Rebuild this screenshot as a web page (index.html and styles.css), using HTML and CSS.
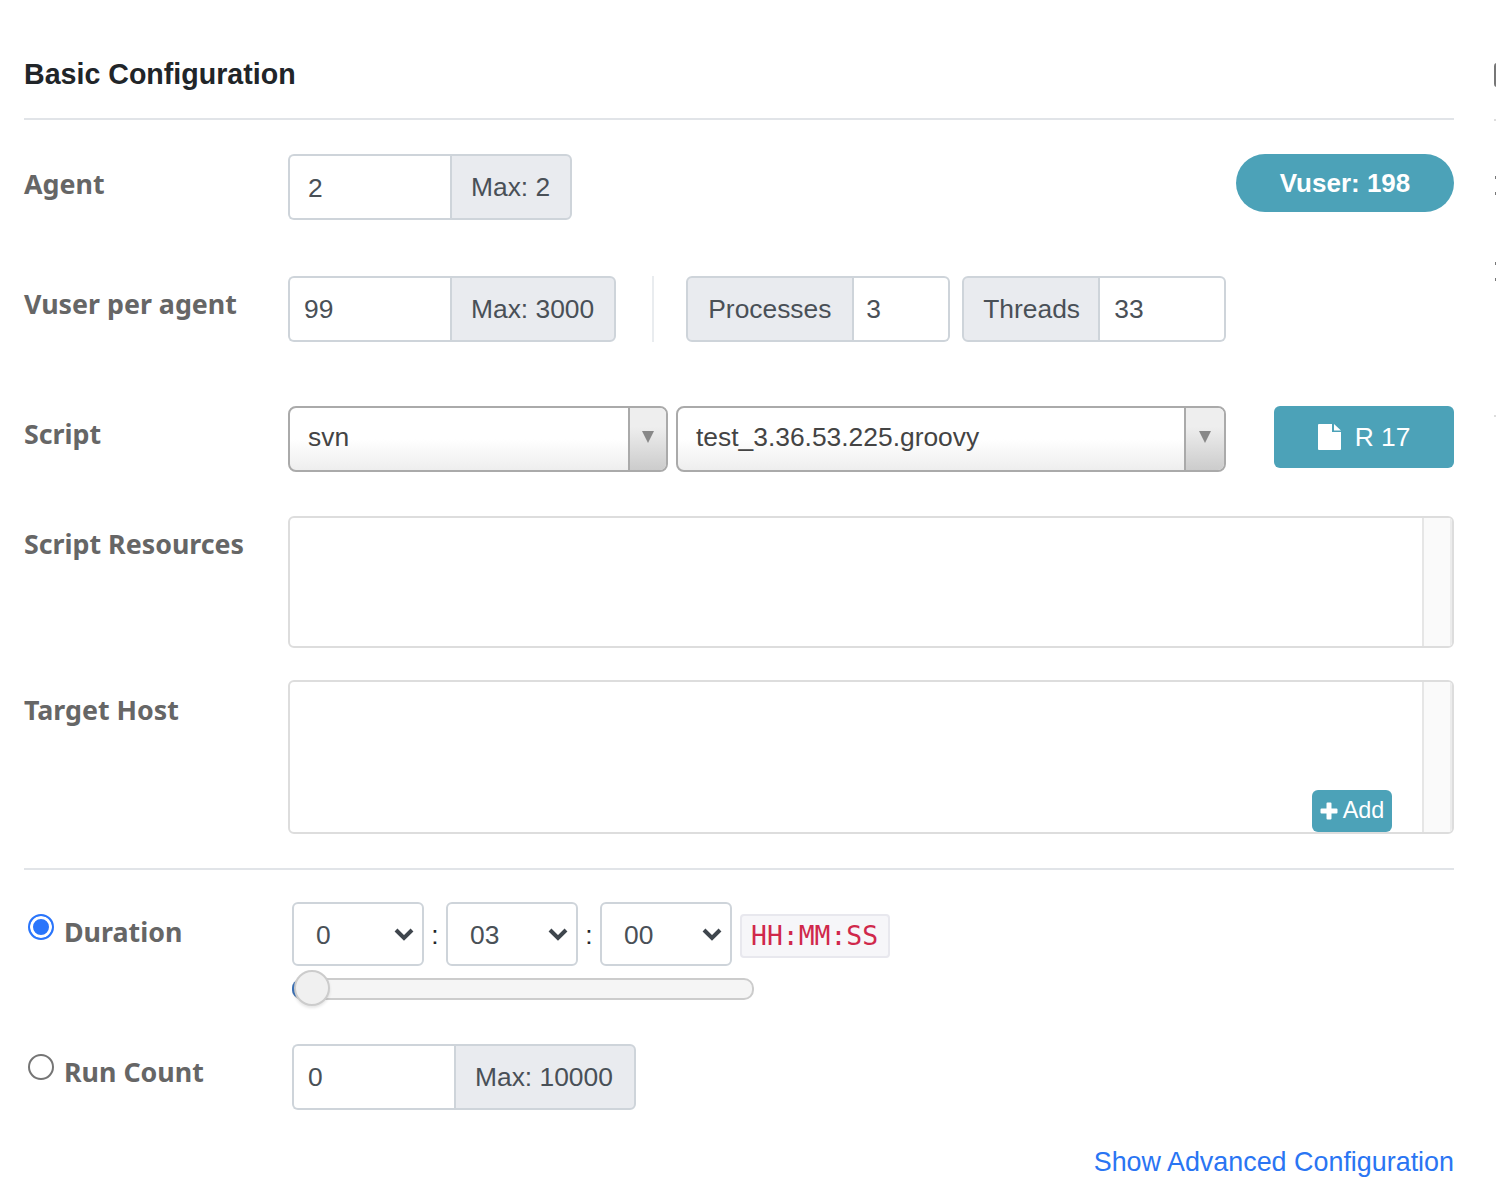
FILE: index.html
```html
<!DOCTYPE html>
<html lang="en">
<head>
<meta charset="utf-8">
<title>Basic Configuration</title>
<link rel="stylesheet" href="styles.css">
</head>
<body>
<div class="page">
  <main class="panel">
    <h2 class="title">Basic Configuration</h2>
    <div class="rule"></div>

    <div class="row row-agent">
      <div class="label">Agent</div>
      <div class="group">
        <div class="field field-162 nudge">2</div>
        <div class="addon addon-right">Max: 2</div>
      </div>
      <div class="pill">Vuser: 198</div>
    </div>

    <div class="row row-vuser">
      <div class="label">Vuser per agent</div>
      <div class="group">
        <div class="field field-162 tight">99</div>
        <div class="addon addon-right">Max: 3000</div>
      </div>
      <div class="vline"></div>
      <div class="group">
        <div class="addon addon-left addon-proc">Processes</div>
        <div class="field field-end field-proc">3</div>
      </div>
      <div class="group group-threads">
        <div class="addon addon-left addon-thr">Threads</div>
        <div class="field field-end field-thr">33</div>
      </div>
    </div>

    <div class="row row-script">
      <div class="label">Script</div>
      <div class="combo combo-svn"><span class="combo-text">svn</span><span class="combo-arrow"><i class="tri"></i></span></div>
      <div class="combo combo-file"><span class="combo-text">test_3.36.53.225.groovy</span><span class="combo-arrow combo-arrow-wide"><i class="tri"></i></span></div>
      <div class="btn-r">
        <svg class="doc" width="23" height="26" viewBox="0 0 23 26"><path fill="#fff" d="M1 0h13v8h9v17a1 1 0 0 1-1 1H1a1 1 0 0 1-1-1V1a1 1 0 0 1 1-1z M16 0l7 6.500h-7z"/></svg>
        <span>R 17</span>
      </div>
    </div>

    <div class="row row-res">
      <div class="label">Script Resources</div>
      <div class="area area-res"><div class="area-side"></div></div>
    </div>

    <div class="row row-host">
      <div class="label">Target Host</div>
      <div class="area area-host">
        <div class="area-side"></div>
        <div class="btn-add">
          <svg width="18" height="18" viewBox="0 0 18 18"><path fill="#fff" d="M6.500 1.500a1 1 0 0 1 1-1h3a1 1 0 0 1 1 1v5h5a1 1 0 0 1 1 1v3a1 1 0 0 1-1 1h-5v5a1 1 0 0 1-1 1h-3a1 1 0 0 1-1-1v-5h-5a1 1 0 0 1-1-1v-3a1 1 0 0 1 1-1h5z"/></svg>
          <span>Add</span>
        </div>
      </div>
    </div>

    <div class="rule rule-two"></div>

    <div class="row row-duration">
      <div class="label label-radio"><span class="radio radio-on"></span>Duration</div>
      <div class="time">
        <div class="selects">
          <div class="sel">0<svg class="chev" width="20" height="14" viewBox="0 0 20 14"><path fill="none" stroke="#3f464d" stroke-width="4" d="M2 3l8 8 8-8"/></svg></div>
          <span class="colon">:</span>
          <div class="sel">03<svg class="chev" width="20" height="14" viewBox="0 0 20 14"><path fill="none" stroke="#3f464d" stroke-width="4" d="M2 3l8 8 8-8"/></svg></div>
          <span class="colon">:</span>
          <div class="sel">00<svg class="chev" width="20" height="14" viewBox="0 0 20 14"><path fill="none" stroke="#3f464d" stroke-width="4" d="M2 3l8 8 8-8"/></svg></div>
          <code class="code">HH:MM:SS</code>
        </div>
        <div class="slider"><span class="slider-fill"></span><span class="thumb"></span></div>
      </div>
    </div>

    <div class="row row-count">
      <div class="label label-radio"><span class="radio"></span>Run Count</div>
      <div class="group">
        <div class="field field-162 tight">0</div>
        <div class="addon addon-right addon-count">Max: 10000</div>
      </div>
    </div>

    <div class="foot"><a class="link" href="#">Show Advanced Configuration</a></div>
  </main>
  <aside class="edge">
    <span class="edge-box"></span>
    <span class="edge-tick edge-soft t0"></span>
    <span class="edge-tick t1"></span>
    <span class="edge-tick t2"></span>
    <span class="edge-tick t3"></span>
    <span class="edge-tick t4"></span>
    <span class="edge-tick edge-soft t5"></span>
  </aside>
</div>
</body>
</html>
```
FILE: styles.css
```css
* { box-sizing: border-box; }
html, body { margin: 0; background: #fff; }
body { font-family: "Liberation Sans", Arial, sans-serif; font-size: 26.4px; color: #495057; }
.page { width: 1496px; height: 1200px; overflow: hidden; display: flex; padding-left: 24px; }
.panel { width: 1430px; flex: none; }

.title { margin: 0; padding-top: 57px; font-size: 28.6px; line-height: 34px; font-weight: 700; color: #212529; height: 118px; }
.rule { height: 2px; background: #e1e4e8; }
.rule-two { margin-top: 34px; }

.row { display: flex; align-items: flex-start; }
.row-agent { margin-top: 34px; }
.row-vuser { margin-top: 56px; }
.row-script { margin-top: 64px; }
.row-res { margin-top: 44px; }
.row-host { margin-top: 32px; }
.row-duration { margin-top: 32px; }
.row-count { margin-top: 44px; }

.label { width: 264px; flex: none; font-family: "Noto Sans", "Open Sans", sans-serif; font-weight: 700; font-size: 26.800px; line-height: 36px; color: #666; margin-top: 12px; white-space: nowrap; }
.row-vuser .label, .row-script .label, .row-res .label, .row-count .label { margin-top: 10px; }
.label-radio { width: 268px; display: flex; align-items: flex-start; }

.group { display: flex; height: 66px; }
.group-threads { margin-left: 12px; }
.field { height: 66px; border: 2px solid #ced4da; background: #fff; line-height: 62px; color: #495057; }
.field-162 { width: 162px; border-right: 0; border-radius: 6px 0 0 6px; padding-left: 18px; }
.field-162.tight { padding-left: 14px; }
.nudge { line-height: 64px; }
.field-end { border-left: 0; border-radius: 0 6px 6px 0; padding-left: 12px; }
.field-proc { width: 96px; }
.field-thr { width: 126px; padding-left: 14px; }
.addon { height: 66px; background: #e9ebef; border: 2px solid #ced4da; line-height: 62px; color: #495057; white-space: nowrap; }
.addon-right { border-radius: 0 6px 6px 0; padding: 0 20px 0 19px; }
.addon-count { padding-right: 21px; }
.addon-left { border-radius: 6px 0 0 6px; padding: 0 20px; }
.addon-proc { width: 168px; }
.addon-thr { width: 138px; padding-left: 19px; }

.pill { margin-left: auto; height: 58px; width: 218px; border-radius: 29px; background: #4ca2b8; color: #fff; font-weight: 700; font-size: 26px; line-height: 58px; text-align: center; }
.vline { width: 2px; height: 66px; background: #e9ecef; margin: 0 32px 0 36px; }

.combo { height: 66px; border: 2px solid #aaa; border-radius: 8px; display: flex; background: linear-gradient(#fff 50%, #eee); color: #444; overflow: hidden; }
.combo-svn { width: 380px; }
.combo-file { width: 550px; margin-left: 8px; }
.combo-text { flex: 1; padding-left: 18px; line-height: 58px; }
.combo-arrow { width: 38px; flex: none; border-left: 2px solid #aaa; background: linear-gradient(#eee 30%, #ccc); display: flex; justify-content: center; padding-top: 23px; }
.combo-arrow-wide { width: 40px; }
.tri { width: 0; height: 0; border-left: 6.500px solid transparent; border-right: 6.500px solid transparent; border-top: 12px solid #888; }
.btn-r { margin-left: 48px; width: 180px; height: 62px; background: #4ca2b8; border-radius: 6px; color: #fff; display: flex; align-items: center; justify-content: center; gap: 14px; }
.doc { flex: none; }

.area { position: relative; width: 1166px; border: 2px solid #ddd; border-radius: 6px; background: #fff; display: flex; justify-content: flex-end; overflow: hidden; }
.area-res { height: 132px; }
.area-host { height: 154px; }
.area-side { width: 30px; background: #fafafa; border-left: 2px solid #e6e6e6; border-right: 2px solid #ececec; }
.btn-add { position: absolute; right: 60px; bottom: 0; width: 80px; height: 42px; padding-bottom: 1px; border-radius: 6px; background: #4ca2b8; color: #fff; font-size: 23.400px; display: flex; align-items: center; justify-content: center; gap: 5px; }

.radio { width: 26px; height: 26px; flex: none; border: 2px solid #757575; border-radius: 50%; background: #fff; margin: 0 10px 0 4px; }
.radio-on { border: 2px solid #2a75fb; box-shadow: inset 0 0 0 3px #fff; background: #2a75fb; }

.time { display: flex; flex-direction: column; }
.selects { display: flex; align-items: flex-start; height: 64px; }
.sel { position: relative; width: 132px; height: 64px; border: 2px solid #ced4da; border-radius: 6px; padding-left: 22px; line-height: 62px; color: #495057; }
.chev { position: absolute; right: 8px; top: 23px; }
.colon { width: 22px; text-align: center; color: #212529; line-height: 66px; }
.code { margin: 12px 0 0 8px; height: 44px; padding: 0 10px 0 9px; border: 2px solid #e8e8ee; border-radius: 4px; background: #f6f6f9; color: #d0284b; font-family: "DejaVu Sans Mono", "Liberation Mono", monospace; font-size: 26.400px; line-height: 40px; }
.slider { position: relative; width: 462px; height: 22px; margin-top: 12px; border: 2px solid #ccc; border-radius: 10px; background: #f5f5f5; }
.slider-fill { position: absolute; left: -2px; top: 0; width: 12px; height: 18px; background: #3c72b8; border-radius: 8px 0 0 8px; }
.thumb { position: absolute; left: 0; top: -10px; width: 36px; height: 36px; border-radius: 50%; background: #f0f0f0; border: 2px solid #ccc; box-shadow: 0 2px 3px rgba(0,0,0,.1); }

.foot { margin-top: 36px; text-align: right; line-height: 32px; }
.link { color: #2a75f3; text-decoration: none; font-size: 26.900px; }

.edge { width: 3px; margin-left: 39px; flex: none; display: flex; flex-direction: column; padding-top: 63px; }
.edge-box { width: 6px; height: 24px; margin-left: 1px; border: 2px solid #777; border-radius: 4px; flex: none; }
.edge-tick { width: 1px; height: 3px; margin-left: 2px; background: #777; flex: none; }
.edge-soft { width: 2px; height: 2px; margin-left: 1px; background: #ddd; }
.t0 { margin-top: 32px; }
.t1 { margin-top: 55px; }
.t2 { margin-top: 13px; }
.t3 { margin-top: 67px; }
.t4 { margin-top: 13px; }
.t5 { margin-top: 134px; }
```
